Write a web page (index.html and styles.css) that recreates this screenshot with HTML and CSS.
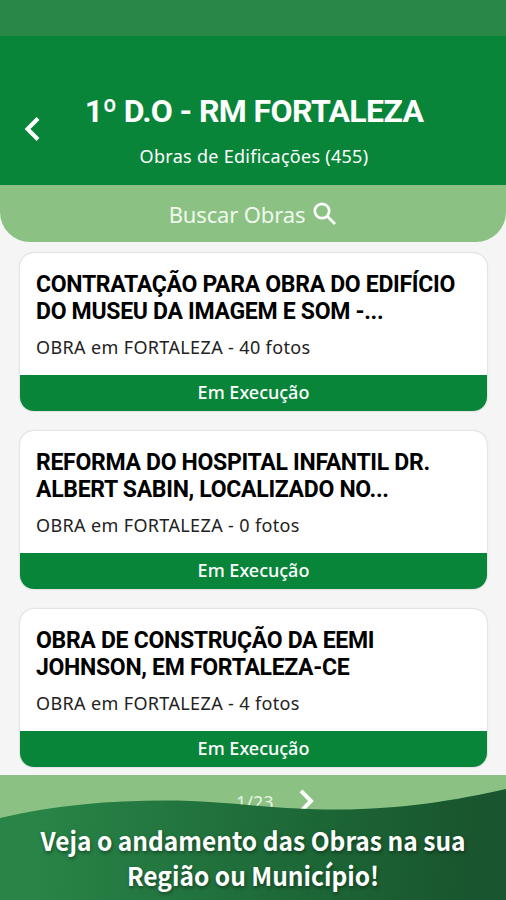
FILE: index.html
```html
<!DOCTYPE html>
<html lang="pt-BR">
<head>
    <meta charset="UTF-8">
    <meta name="viewport" content="width=device-width, initial-scale=1.0">
    <title>Obras de Edificações</title>
    <link rel="stylesheet" href="styles.css">
</head>
<body>
    <div class="screen">
        <div class="status-bar"></div>

        <header class="header">
            <svg class="back-icon" viewBox="0 0 16 24" aria-label="Voltar">
                <path d="M14 1.5 L3.5 12 L14 22.5"/>
            </svg>
            <div class="header-text">
                <h1>1º D.O - RM FORTALEZA</h1>
                <p>Obras de Edificações (455)</p>
            </div>
        </header>

        <div class="search">
            <span>Buscar Obras</span>
            <svg class="search-icon" viewBox="0 0 24 24">
                <circle cx="9" cy="9" r="7.2"/>
                <path d="M14.3 14.3 L22 22"/>
            </svg>
        </div>

        <main class="list">
            <article class="card">
                <div class="card-body">
                    <h2>CONTRATAÇÃO PARA OBRA DO EDIFÍCIO<br>DO MUSEU DA IMAGEM E SOM -...</h2>
                    <p>OBRA em FORTALEZA - 40 fotos</p>
                </div>
                <div class="card-status">Em Execução</div>
            </article>

            <article class="card">
                <div class="card-body">
                    <h2>REFORMA DO HOSPITAL INFANTIL DR.<br>ALBERT SABIN, LOCALIZADO NO...</h2>
                    <p>OBRA em FORTALEZA - 0 fotos</p>
                </div>
                <div class="card-status">Em Execução</div>
            </article>

            <article class="card">
                <div class="card-body">
                    <h2>OBRA DE CONSTRUÇÃO DA EEMI<br>JOHNSON, EM FORTALEZA-CE</h2>
                    <p>OBRA em FORTALEZA - 4 fotos</p>
                </div>
                <div class="card-status">Em Execução</div>
            </article>
        </main>

        <footer class="pagination">
            <span>1/23</span>
            <svg class="next-icon" viewBox="0 0 16 24" aria-label="Próxima">
                <path d="M2 1.8 L12 12 L2 22.2"/>
            </svg>
        </footer>

        <!-- Banner -->
        <div class="banner">
            <svg class="banner-wave" viewBox="0 0 506 112" preserveAspectRatio="none">
                <defs>
                    <linearGradient id="bannerFill" gradientUnits="userSpaceOnUse" x1="40" y1="50" x2="480" y2="80">
                        <stop offset="0" stop-color="#288447"/>
                        <stop offset="0.65" stop-color="#1c6535"/>
                        <stop offset="1" stop-color="#19552e"/>
                    </linearGradient>
                </defs>
                <path fill="url(#bannerFill)" d="M0 30 C55 17 110 12.5 165 12.5 C230 12.5 265 21.5 338 21.5 C400 21.5 458 12 506 1 V112 H0 Z"/>
            </svg>
            <p>Veja o andamento das Obras na sua<br>Região ou Município!</p>
        </div>
    </div>
</body>
</html>
```
FILE: styles.css
```css
* {
    margin: 0;
    padding: 0;
    box-sizing: border-box;
}

body {
    font-family: 'Noto Sans', 'Open Sans', sans-serif;
    background: #f5f5f5;
}

.screen {
    position: relative;
    width: 506px;
    height: 900px;
    overflow: hidden;
    display: flex;
    flex-direction: column;
}

.status-bar {
    height: 36px;
    background: #298747;
}

.header {
    height: 149px;
    padding: 56px 24px 0;
    display: flex;
    background: #09853a;
    color: #fff;
}

.back-icon {
    width: 16px;
    height: 24px;
    margin-top: 25px;
}

.back-icon path,
.next-icon path {
    fill: none;
    stroke: #fff;
    stroke-width: 4;
}

.header-text {
    flex: 1;
    margin-right: 14px;
    text-align: center;
}

.header h1 {
    font-family: Roboto, sans-serif;
    font-size: 32px;
    font-weight: 700;
    line-height: 38px;
    letter-spacing: -0.62px;
    white-space: nowrap;
}

.header p {
    margin-top: 13px;
    font-size: 18px;
    line-height: 26px;
    letter-spacing: 0.28px;
}

.search {
    height: 57px;
    display: flex;
    align-items: center;
    justify-content: center;
    gap: 8px;
    background: #8bc284;
    border-radius: 0 0 30px 30px;
    color: #f0f8ee;
    font-size: 22px;
    letter-spacing: -0.15px;
}

.search-icon {
    width: 24px;
    height: 24px;
    fill: none;
    stroke: #fff;
    stroke-width: 2.7;
}

.list {
    height: 533px;
    padding: 11px 19px 0 20px;
    display: flex;
    flex-direction: column;
    gap: 20.5px;
}

.card {
    height: 157.5px;
    flex-shrink: 0;
    display: flex;
    flex-direction: column;
    background: #fff;
    border-radius: 14px;
    box-shadow: 0 0 2px rgba(0, 0, 0, 0.25);
    overflow: hidden;
}

.card-body {
    flex: 1;
    padding: 18px 16px 0;
    color: #000;
}

.card h2 {
    font-family: Roboto, sans-serif;
    font-size: 23px;
    font-weight: 700;
    line-height: 27px;
    letter-spacing: -0.3px;
    white-space: nowrap;
}

.card p {
    margin-top: 9px;
    font-size: 18px;
    line-height: 26px;
    letter-spacing: 0.36px;
    color: #222;
}

.card-status {
    height: 35.5px;
    background: #09853a;
    color: #fff;
    font-size: 18px;
    font-weight: 500;
    line-height: 35px;
    text-align: center;
}

.pagination {
    flex: 1;
    padding: 14px 0 0 236px;
    display: flex;
    align-items: flex-start;
    gap: 25px;
    background: #8bc284;
    color: #e4f3e0;
    font-size: 18px;
    line-height: 26px;
}

.next-icon {
    width: 16px;
    height: 24px;
}

.banner {
    position: absolute;
    left: 0;
    right: 0;
    bottom: 0;
    height: 112px;
}

.banner-wave {
    position: absolute;
    width: 100%;
    height: 100%;
}

.banner p {
    position: relative;
    padding-top: 34px;
    color: #fff;
    font-family: 'Noto Sans CJK JP', sans-serif;
    font-size: 26px;
    font-weight: 700;
    line-height: 35px;
    text-align: center;
    text-shadow: 1px 2px 4px rgba(0, 0, 0, 0.4);
    transform: scaleX(0.943);
}
```
